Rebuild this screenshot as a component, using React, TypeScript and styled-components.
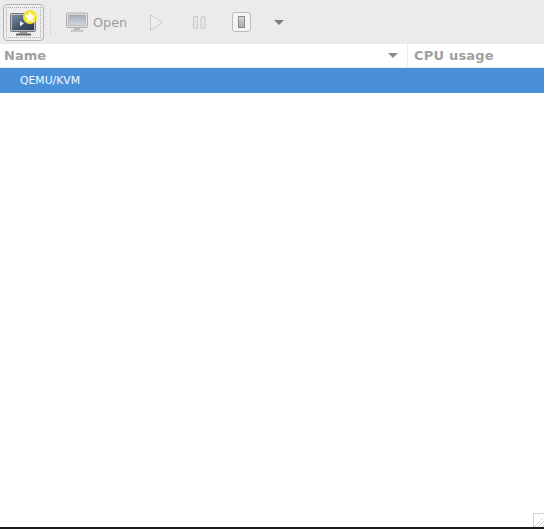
import React from "react";
import styled, { createGlobalStyle } from "styled-components";

const GlobalStyle = createGlobalStyle`
  html, body {
    margin: 0;
    padding: 0;
    background: #fff;
  }
`;

const Window = styled.div`
  position: relative;
  width: 544px;
  height: 529px;
  display: flex;
  flex-direction: column;
  overflow: hidden;
  background: #fff;
  font-family: "DejaVu Sans", sans-serif;
`;

const Toolbar = styled.div`
  height: 44px;
  flex: none;
  display: flex;
  align-items: center;
  padding-left: 3px;
  background: #ebebeb;
  box-sizing: border-box;
`;

const NewButton = styled.div`
  width: 41px;
  height: 37px;
  margin-top: 1px;
  box-sizing: border-box;
  border: 1px solid #b4b4b4;
  border-radius: 4px;
  background: #eeeeee;
  padding: 2px;
`;

const FocusRing = styled.div`
  height: 100%;
  box-sizing: border-box;
  border: 1px dotted #a8a8a8;
  display: flex;
  align-items: center;
  justify-content: center;
`;

const Separator = styled.div`
  width: 1px;
  height: 26px;
  margin: 0 15px 0 6px;
  background: #d8d8d8;
`;

const OpenLabel = styled.span`
  margin-left: 5px;
  font-size: 12.8px;
  color: #9c9c9c;
`;

const ToolIcon = styled.div<{ $left: number }>`
  display: flex;
  margin-left: ${(p) => p.$left}px;
`;

const ShutdownButton = styled.div`
  width: 19px;
  height: 20px;
  margin-left: 26px;
  box-sizing: border-box;
  border: 1px solid #bcbcbc;
  border-radius: 3px;
  background: #f4f4f4;
  display: flex;
  align-items: center;
  justify-content: center;
`;

const MenuArrow = styled.div<{ $left: number; $color: string }>`
  width: 0;
  height: 0;
  margin-left: ${(p) => p.$left}px;
  border-left: 5px solid transparent;
  border-right: 5px solid transparent;
  border-top: 5px solid ${(p) => p.$color};
`;

const ColumnHeader = styled.div`
  height: 24px;
  flex: none;
  display: grid;
  grid-template-columns: 407px 1fr;
  box-sizing: border-box;
  border-bottom: 1px solid #ececec;
`;

const HeaderCell = styled.div<{ $divider?: boolean }>`
  display: flex;
  align-items: center;
  justify-content: space-between;
  box-sizing: border-box;
  padding: 0 9px 0 ${(p) => (p.$divider ? 6 : 4)}px;
  font-size: 13px;
  font-weight: 700;
  letter-spacing: ${(p) => (p.$divider ? 0.2 : 0)}px;
  color: #a0a0a0;
  border-left: ${(p) => (p.$divider ? "1px solid #ececec" : "none")};
`;

const SelectedRow = styled.div`
  height: 25px;
  flex: none;
  display: flex;
  align-items: center;
  padding-left: 20px;
  background: #4a90d9;
  color: #f4f8fc;
  font-size: 10.8px;
`;

const Body = styled.div`
  flex: 1;
`;

const Grip = styled.div`
  position: absolute;
  right: 0;
  bottom: 2px;
  width: 11px;
  height: 14px;
  box-sizing: border-box;
  border-left: 1px solid #d4d4d4;
  border-top: 1px solid #d4d4d4;
  display: flex;
`;

const BottomEdge = styled.div`
  height: 2px;
  flex: none;
  background: #1c1c1c;
`;

const ManagerIcon = () => (
  <svg width="28" height="26" viewBox="0 0 28 26">
    <defs>
      <linearGradient id="scr" x1="0" y1="0" x2="1" y2="1">
        <stop offset="0" stopColor="#7d90a4" />
        <stop offset="0.6" stopColor="#3f5064" />
        <stop offset="1" stopColor="#2c3a4a" />
      </linearGradient>
      <radialGradient id="glow">
        <stop offset="0.55" stopColor="#f6ea2e" />
        <stop offset="0.85" stopColor="#f0e23a" />
        <stop offset="1" stopColor="#f0e23a" stopOpacity="0.1" />
      </radialGradient>
    </defs>
    <rect x="0.5" y="3.5" width="25" height="18" rx="1" fill="#b9bcc0" stroke="#75787c" />
    <rect x="2" y="5" width="22" height="15" fill="url(#scr)" />
    <path d="M9.5 22h8v1.5h-8z" fill="#9a9a9a" />
    <path d="M6 23.5h15v2H6z" fill="#666" />
    <path d="M10 11l4 2.6-4 2.6z" fill="#f4f4f4" />
    <circle cx="20" cy="7" r="7.5" fill="url(#glow)" />
    <path d="M20 1.6l1.7 3.5 3.8.5-2.8 2.7.7 3.8-3.4-1.8-3.4 1.8.7-3.8-2.8-2.7 3.8-.5z" fill="#fffde8" />
  </svg>
);

const MonitorIcon = () => (
  <svg width="22" height="20" viewBox="0 0 22 20">
    <defs>
      <linearGradient id="mon" x1="0" y1="0" x2="0" y2="1">
        <stop offset="0" stopColor="#a3adb8" />
        <stop offset="1" stopColor="#d4d8dc" />
      </linearGradient>
    </defs>
    <rect x="0.5" y="1" width="21" height="14.5" rx="1" fill="#e4e4e4" stroke="#aeaeae" />
    <rect x="2.5" y="3" width="17" height="10.5" fill="url(#mon)" stroke="#9aa0a6" strokeWidth="0.5" />
    <path d="M8 16h6v2H8z" fill="#bbb" />
    <path d="M5 18h12v1.6H5z" fill="#d0d0d0" stroke="#bababa" strokeWidth="0.5" />
  </svg>
);

const PlayIcon = () => (
  <svg width="13" height="17" viewBox="0 0 13 17">
    <path d="M.5 1v15L12.5 8.5z" fill="#eeeeee" stroke="#c8c8c8" />
  </svg>
);

const PauseIcon = () => (
  <svg width="13" height="13" viewBox="0 0 13 13">
    <rect x="0.5" y="0.5" width="4" height="12" rx="0.5" fill="#e6e6e6" stroke="#c8c8c8" />
    <rect x="8" y="0.5" width="4" height="12" rx="0.5" fill="#e6e6e6" stroke="#c8c8c8" />
  </svg>
);

const PowerIcon = () => (
  <svg width="7" height="12" viewBox="0 0 7 12">
    <defs>
      <linearGradient id="pow" x1="0" y1="0" x2="0" y2="1">
        <stop offset="0" stopColor="#d8d8d8" />
        <stop offset="1" stopColor="#a8a8a8" />
      </linearGradient>
    </defs>
    <rect x="0.5" y="0.5" width="6" height="11" fill="url(#pow)" stroke="#8c8c8c" />
  </svg>
);

const GripLines = () => (
  <svg width="10" height="13" viewBox="0 0 10 13">
    <path d="M0 13L10 3M4 13l6-6M8 13l2-2" stroke="#b5b5b5" strokeDasharray="1 1" fill="none" />
  </svg>
);

export default function App() {
  return (
    <Window>
      <GlobalStyle />
      <Toolbar>
        <NewButton>
          <FocusRing>
            <ManagerIcon />
          </FocusRing>
        </NewButton>
        <Separator />
        <MonitorIcon />
        <OpenLabel>Open</OpenLabel>
        <ToolIcon $left={23}>
          <PlayIcon />
        </ToolIcon>
        <ToolIcon $left={30}>
          <PauseIcon />
        </ToolIcon>
        <ShutdownButton>
          <PowerIcon />
        </ShutdownButton>
        <MenuArrow $left={23} $color="#7d7d7d" />
      </Toolbar>
      <ColumnHeader>
        <HeaderCell>
          Name
          <MenuArrow $left={0} $color="#8a8a8a" />
        </HeaderCell>
        <HeaderCell $divider>CPU usage</HeaderCell>
      </ColumnHeader>
      <SelectedRow>QEMU/KVM</SelectedRow>
      <Body />
      <BottomEdge />
      <Grip>
        <GripLines />
      </Grip>
    </Window>
  );
}
